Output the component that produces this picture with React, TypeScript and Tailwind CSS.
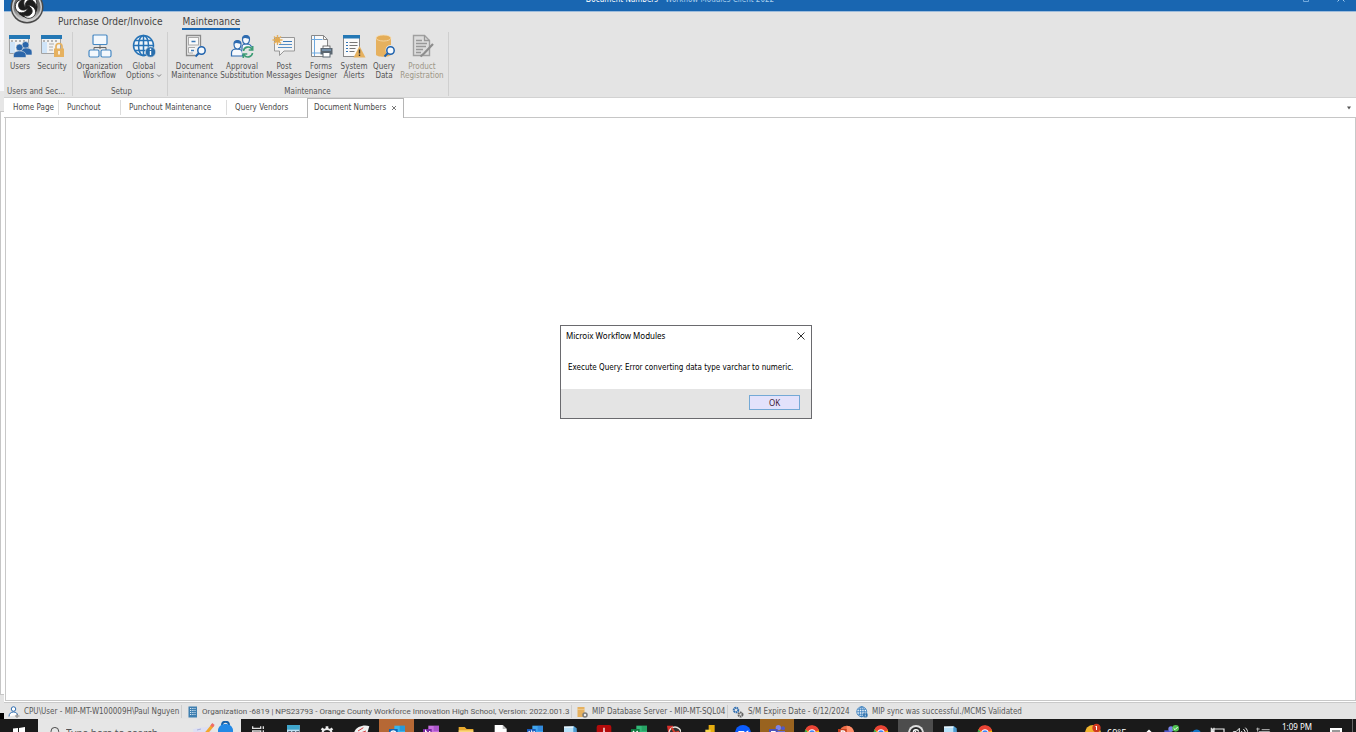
import React, { ReactNode } from "react";

const BLUE = "#2f6db0";
const DARK = "#7b7b7b";
const TAN = "#e6b15f";

function Svg({ children, size = "size-6" }: { children: ReactNode; size?: string }) {
  return (
    <svg viewBox="0 0 24 24" className={`${size} shrink-0`} fill="none" aria-hidden="true">
      {children}
    </svg>
  );
}

function WindowBase() {
  return (
    <>
      <path d="M1.5 5v14.500h19V5" fill="#f2f2f2" stroke="#a3a3a3" />
      <rect x="2" y="8" width="5" height="11" fill="#cfe4f8" />
      <rect x="1" y="1" width="21" height="4" fill="#2478b5" />
      <path d="M3 7h2M7 7h2M11 7h2M15 7h2" stroke="#777" />
    </>
  );
}

function Lens({ x, y }: { x: number; y: number }) {
  return (
    <g transform={`translate(${x} ${y})`}>
      <path d="M-2.500 2.500-6 6" stroke="#1f62ad" strokeWidth="2" />
      <circle r="3.700" fill="#f4f8fc" stroke="#1f62ad" strokeWidth="1.500" />
    </g>
  );
}

const UsersIcon = () => (
  <Svg>
    <WindowBase />
    <g fill="#2b66aa" stroke="#e4e4e4" strokeWidth=".6">
      <circle cx="17.500" cy="11" r="3.500" />
      <path d="M13 21v-3c0-3 2-4 4.500-4 4 0 6.500 1 6.500 4v3z" />
      <circle cx="11.500" cy="13.500" r="3.500" />
      <path d="M5.500 23.500v-2c0-3.500 3-4.500 6-4.500s6.500 1 6.500 4.500v2z" />
    </g>
  </Svg>
);
const SecurityIcon = () => (
  <Svg>
    <WindowBase />
    <path d="M9 10h5M9 13h4M9 16h4" stroke="#aaa" />
    <path d="M16 15v-2.500a3 3 0 0 1 6 0V15" stroke={TAN} strokeWidth="1.700" />
    <rect x="14" y="14.500" width="10" height="8.500" fill={TAN} />
    <path d="M19 17v3.500" stroke="#fff" strokeWidth="1.500" />
  </Svg>
);
const OrgIcon = () => (
  <Svg>
    <path d="M12 10v5M6 17v-3.500h12V17" stroke="#666" />
    <g fill="#f3f8fd" stroke="#4688c3" strokeWidth="1.200">
      <rect x="5" y="1" width="14" height="9.500" rx="1" />
      <rect x="1" y="16" width="10" height="7" rx="1.500" />
      <rect x="13" y="16" width="10" height="7" rx="1.500" />
    </g>
  </Svg>
);
const GlobeIcon = ({ size }: { size?: string }) => (
  <Svg size={size}>
    <g stroke="#2672b5" strokeWidth="1.500">
      <circle cx="11.500" cy="11.500" r="10" fill="#eef4fa" />
      <ellipse cx="11.500" cy="11.500" rx="5" ry="10" />
      <path d="M11.500 1.500v20M1.500 11.500h20M3 6.500h17M3 16.500h17" />
    </g>
    <circle cx="18.500" cy="18" r="5.200" fill="#2a6fad" stroke="#e4e4e4" strokeWidth=".6" />
    <path d="M18.500 14.500v1.500M18.500 17v4" stroke="#fff" strokeWidth="1.400" />
  </Svg>
);
const CabinetIcon = () => (
  <Svg>
    <path d="M12 21.500H3.500v-20h14V12" fill="#efefef" stroke="#8b8b8b" strokeWidth="1.300" />
    <rect x="5.500" y="3.500" width="10" height="7.500" fill="#fafafa" stroke="#aaa" />
    <path d="M12 13.500H5.500V19H10" fill="#fafafa" stroke="#aaa" />
    <path d="M8.500 7.500h4M8 16.500h3" stroke="#3c7ab8" strokeWidth="1.600" />
    <Lens x={18.5} y={16.5} />
  </Svg>
);
const ApprovalIcon = () => (
  <Svg>
    <g fill="#f6f9fd" stroke="#2d6bb0" strokeWidth="1.200">
      <path d="M12 16v-3c0-2 2-3 3.500-3h1c3 0 5 1.500 5 4v2z" />
      <path d="M12.500 5a3.500 3.500 0 1 1 7 0c0 3-1.500 5-3.500 5s-3.500-2-3.500-5z" />
      <path d="M1.500 22v-3c0-2.500 2-4 5-4s6 1.500 6 4v3z" />
      <path d="M4 10a3.500 3.500 0 1 1 7 0c0 3-1.500 5-3.500 5S4 13 4 10z" />
    </g>
    <path d="M12.500 5c0-5 7-5 7 0-2 0-4-2-7 0zM4 10c0-5 7-5 7 0-2 0-4-2-7 0z" fill="#2d6bb0" />
    <circle cx="18" cy="18" r="6" fill="#e4e4e4" />
    <path d="M13.500 17a4.700 4.700 0 0 1 8.500-2m.500 4a4.700 4.700 0 0 1-8.500 2M22.700 12v4h-4M13.300 24v-4h4" stroke="#3c9c74" strokeWidth="1.600" />
  </Svg>
);
const PostIcon = () => (
  <Svg>
    <path d="M2.500 3.500h20v13.500H12l-4.500 4.500V17h-5z" fill="#f3f3f3" stroke="#989898" />
    <path d="M11 7.500h9" stroke="#3c7ab8" />
    <path d="M7 10.500h13M6 13.500h14" stroke="#5a90c5" />
    <path d="M5.500 1v10M.5 6h10M2 2.500l7 7M9 2.500l-7 7" stroke={TAN} strokeWidth="1.400" />
    <circle cx="5.500" cy="6" r="2.600" fill="#e3aa50" />
  </Svg>
);
const FormsIcon = () => (
  <Svg>
    <path d="M2.500 1.500h12l4 4v17h-16z" fill="#fafafa" stroke="#888" />
    <path d="M14.500 1.500v4h4" stroke="#888" />
    <path d="M5.500 2v20M2.500 5.500h11M2.500 19h10" stroke="#6ea9df" />
    <rect x="14" y="12" width="7" height="3" fill="#fff" stroke="#555" strokeWidth=".8" />
    <rect x="11.500" y="14" width="12" height="6.500" fill="#5b6670" />
    <path d="M13 16h9" stroke="#91bce4" />
    <rect x="14" y="18.500" width="7" height="4.500" fill="#fff" stroke="#5b6670" />
  </Svg>
);
const AlertsIcon = () => (
  <Svg>
    <rect x="1.500" y="2.500" width="16" height="20" fill="#fafafa" stroke="#888" />
    <rect x="1" y="1" width="17" height="3.500" fill="#2478b5" />
    <path d="M4 8.500h2M4 11.500h2M4 14.500h2M4 17.500h2" stroke="#3475b5" />
    <path d="M7.500 8.500h8M7.500 11.500h8M7.500 14.500h6M7.500 17.500h5" stroke="#777" />
    <path d="m17.500 12 6 11.500h-12z" fill={TAN} />
    <path d="M17.500 15.500v4M17.500 20.500v1.500" stroke="#333" strokeWidth="1.400" />
  </Svg>
);
const QueryIcon = () => (
  <Svg>
    <path d="M4 4v16.500c0 3 15 3 15 0V4" fill={TAN} />
    <ellipse cx="11.500" cy="4" rx="7.500" ry="3" fill="#e4ad58" stroke="#f5dcb0" strokeWidth=".8" />
    <circle cx="18.500" cy="16" r="5" fill="#e4e4e4" />
    <Lens x={18.5} y={16.5} />
  </Svg>
);
const ProductIcon = () => (
  <Svg>
    <path d="M3.500 1.500h11l5 5v15h-16z" fill="#dcdcdc" stroke="#a0a0a0" strokeWidth="1.400" />
    <path d="M14.500 1.500v5h5M6 6.500h6M6 9.500h11M6 12.500h10M6 15.500h7M6 18.500h5" stroke="#989898" strokeWidth="1.300" />
    <path d="m23 10-9 9.500-3.500 3" stroke="#8d8d8d" strokeWidth="2.200" />
  </Svg>
);

function RibbonButton({ width, icon, lines, muted, menu }: { width: string; icon: ReactNode; lines: string[]; muted?: boolean; menu?: boolean }) {
  return (
    <button className={`${width} flex shrink-0 flex-col items-center gap-1 whitespace-nowrap ${muted ? "text-[#9d9787]" : "text-[#555]"}`}>
      {icon}
      <span className="flex flex-col items-center leading-[9px]">
        {lines.map((l, i) => (
          <span key={l} className="flex items-center gap-0.5">
            {l}
            {menu && i === lines.length - 1 && (
              <svg viewBox="0 0 6 4" className="h-1 w-1.5" fill="none" stroke="#777">
                <path d="m1 .5 2 2 2-2" />
              </svg>
            )}
          </span>
        ))}
      </span>
    </button>
  );
}

function RibbonGroup({ title, pad, children }: { title: string; pad: string; children: ReactNode }) {
  return (
    <section className={`flex flex-col justify-between border-r border-[#cfcfcf] ${pad}`}>
      <div className="flex pt-0.5">{children}</div>
      <h2 className="text-center leading-[9px] text-[#555]">{title}</h2>
    </section>
  );
}

function Tab({ width, label }: { width: string; label: string }) {
  return (
    <button className={`${width} my-0.5 border-r border-[#dcdcdc] pl-2 text-left`}>{label}</button>
  );
}

function Swirl({ className }: { className: string }) {
  return (
    <svg viewBox="0 0 34 34" className={className} aria-hidden="true">
      <defs>
        <linearGradient id="orb" x1="0" y1="0" x2="0" y2="1">
          <stop offset="0" stopColor="#555" />
          <stop offset=".6" stopColor="#777" />
          <stop offset="1" stopColor="#d8d8d8" />
        </linearGradient>
      </defs>
      <circle cx="17" cy="17" r="16.500" fill="#4a4a4a" />
      <circle cx="17" cy="17" r="15" fill="#cfcfcf" />
      <circle cx="17" cy="17" r="13.500" fill="url(#orb)" />
      <circle cx="17" cy="17" r="10.500" fill="#1d1d1d" />
      {[20, 140, 260].map((a) => (
        <g key={a} transform={`rotate(${a} 17 17)`}>
          <path d="M15.500 18C10 14 11.500 6 18 5.500c5 0 8 4 7 8-1-3-3.500-5-6.500-4.500-4 .5-5 5-3 9z" fill="#fff" stroke="#222" strokeWidth=".8" />
        </g>
      ))}
    </svg>
  );
}

function StatusItem({ icon, children, last, width }: { icon: ReactNode; children: ReactNode; last?: boolean; width: string }) {
  return (
    <div className={`${width} my-px flex shrink-0 items-center gap-1 whitespace-nowrap pl-1 ${last ? "" : "border-r border-[#cdcdcd]"}`}>
      {icon}
      <span>{children}</span>
    </div>
  );
}

const chrome = (
  <>
    <circle cx="12" cy="12" r="11" fill="#fbbc05" />
    <path d="M12 12 2 7a11 11 0 0 1 20.500 1z" fill="#ea4335" />
    <path d="M1 12a11 11 0 0 1 1.500-5.500L8 15l3 8A11 11 0 0 1 1 12" fill="#34a853" />
    <circle cx="12" cy="12" r="5.500" fill="#fff" />
    <circle cx="12" cy="12" r="4.300" fill="#4285f4" />
  </>
);
const notebook = (
  <>
    <path d="m3 3 15-1 2 22H3z" fill="#b9e1f8" />
    <path d="m17 1 5 4 1 19h-6z" fill="#4e9bd0" />
    <path d="M3 2h14v2.500H3z" fill="#e2f2fb" />
  </>
);
const office = (dark: string, light: string, glyph: string) => (
  <>
    <path d="M8 1h16v23H8z" fill={light} />
    <path d="M16 1h8v8h-8z" fill={dark} fillOpacity=".35" />
    <path d="M0 6h13v14H0z" fill={dark} />
    <path d={glyph} stroke="#fff" strokeWidth="2" fill="none" />
  </>
);

const taskIcons: { name: string; bg?: string; art: ReactNode }[] = [
  { name: "Task View", art: <path d="M4 2v3h12V2M4 9h12v9H4zM20 2v4M20 8v8" stroke="#ddd" strokeWidth="2" /> },
  { name: "Calculator", art: <><path d="M3 0h19v24H3z" fill="#bcdff0" /><path d="M3 0h19v7H3z" fill="#3fa6cc" /><path d="M5 10h4M11 10h4M17 10h4" stroke="#567" strokeWidth="2" /></> },
  { name: "Settings", art: <><circle cx="12" cy="13" r="7" stroke="#eee" strokeWidth="3" /><path d="M12 2v4M4 5l3 3M20 5l-3 3M1 13h4M19 13h4" stroke="#eee" strokeWidth="4" /></> },
  { name: "Snip", art: <><path d="M0 12C2 2 16-1 23 2l-3 10-8 5z" fill="#efefef" /><path d="m6 9 8-5M10 12l8-3" stroke="#d43d3d" strokeWidth="1.500" /></> },
  { name: "Outlook", bg: "bg-[#b66835]", art: office("#0f66b7", "#36b5ed", "M6.500 9a3.500 3.500 0 1 0 0 8 3.500 3.500 0 0 0 0-8") },
  { name: "OneNote", art: office("#7928a1", "#c870e0", "M4 17V9l6 8V9") },
  { name: "File Explorer", art: <><path d="M1 3h9l3 3h10v16H1z" fill="#e8a92e" /><path d="M1 8h22v14H1z" fill="#fbd778" /></> },
  { name: "Document", art: <><path d="M4 0h12l6 6v18H4z" fill="#fff" /><path d="M16 0v6h6" fill="#bbb" /></> },
  { name: "Word", art: office("#185abd", "#41a5ee", "m3 9 2 8 2-7 2 7 2-8") },
  { name: "Notepad", art: notebook },
  { name: "Acrobat", art: <><rect x="1" width="22" height="24" rx="3" fill="#b30b0b" /><path d="M12 4v6l-5 6M12 10l5 5" stroke="#fff" strokeWidth="2" /></> },
  { name: "Excel", art: office("#107c41", "#33b978", "m3 9 7 8M10 9l-7 8") },
  { name: "Capture", art: <><path d="M3 1h9v12H5z" fill="#d9302c" /><circle cx="15" cy="12" r="9" fill="#333" stroke="#e9e4dc" strokeWidth="2" /><path d="m15 12-5-8M15 12l6-2" stroke="#d83a26" strokeWidth="3" /></> },
  { name: "Power BI", art: <><path d="M13 0h9v24h-9z" fill="#e6ad10" /><path d="M8 7h8v17H8z" fill="#f6d751" /></> },
  { name: "Zoom", art: <><circle cx="12" cy="12" r="12" fill="#0b5cff" /><path d="M5 9h9v7H5zM15 11l5-3v8l-5-3z" fill="#fff" /></> },
  { name: "Teams", bg: "bg-[#99631f]", art: <><circle cx="14" cy="4" r="4" fill="#7b83eb" /><circle cx="21" cy="5" r="3" fill="#5059c9" /><path d="M8 9h16v12H8z" fill="#6a72d8" /><path d="M0 6h13v14H0z" fill="#4b53bc" /><path d="M3 10h7M6.500 10v7" stroke="#fff" strokeWidth="2" /></> },
  { name: "Chrome", art: chrome },
  { name: "PowerPoint", art: <><circle cx="13" cy="12" r="11" fill="#ed6c47" /><path d="M13 1a11 11 0 0 1 11 11H13z" fill="#ff8f6b" /><path d="M0 6h13v14H0z" fill="#c43e1c" /><path d="M5 17V9h3a2 2 0 0 1 0 5H5" stroke="#fff" strokeWidth="2" /></> },
  { name: "Chrome 2", art: chrome },
  { name: "Workflow Modules", bg: "bg-[#4d4d4d]", art: <><circle cx="12" cy="12" r="12" fill="#ddd" /><circle cx="12" cy="12" r="9" fill="#2a2a2a" /><path d="M8 11c0-5 7-5 8-1M8 17c3-1 4-4 3-8" stroke="#fff" strokeWidth="2" /></> },
  { name: "Notepad 2", art: notebook },
  { name: "Chrome 3", art: chrome },
];

function TrayIcon({ label, width, children }: { label: string; width: string; children: ReactNode }) {
  return (
    <button aria-label={label} className={`${width} flex shrink-0 justify-center pt-1.5`}>
      <svg viewBox="0 0 24 24" className="size-4" fill="none" aria-hidden="true">{children}</svg>
    </button>
  );
}

export default function App() {
  return (
    <div className="relative flex h-screen flex-col overflow-hidden bg-white font-['DejaVu_Sans_Condensed','Noto_Sans',sans-serif] text-[8px] text-[#484848]">
      <div className="flex min-h-0 flex-1">
        <div className="flex w-1 shrink-0 flex-col" aria-hidden="true">
          <div className="h-[91px] bg-[#f8f8fb]" />
          <div className="h-5 bg-[#e6e6e6]" />
          <div className="flex-1 border-y border-l border-[#c6c6c6]" />
          <div className="h-[18px] bg-[#e4e4e4]" />
          <div className="h-1.5 bg-black" />
        </div>

        <main className="flex min-w-0 flex-1 flex-col">
          <header className="flex h-3 shrink-0 justify-center overflow-hidden border-b border-[#9dbcdc] bg-[#1966b1]">
            <h1 className="-mt-1.5 leading-[12px] text-[#a9d0ee]">
              <span className="text-white">Document Numbers</span> - Workflow Modules Client 2022
            </h1>
          </header>
          <div className="absolute top-0 right-[11px] flex h-1 gap-[26px] overflow-hidden">
            <button aria-label="Restore">
              <svg viewBox="0 0 8 8" className="-mt-2 size-2" fill="none" stroke="#72a9dc">
                <path d="M.5 2.500h5v5h-5zM2.500 2V.5h5v5H6" />
              </svg>
            </button>
            <button aria-label="Close">
              <svg viewBox="0 0 8 8" className="-mt-2 size-2" fill="none" stroke="#a4cdef">
                <path d="m.5.5 7 7M7.500.5l-7 7" />
              </svg>
            </button>
          </div>
          <button aria-label="Application menu" className="absolute -top-2.5 left-2.5">
            <Swirl className="size-[34px]" />
          </button>

          <div className="shrink-0 border-b border-[#d2d2d2] bg-[#e4e4e4]">
            <nav className="flex gap-5 pt-1 pl-[54px] text-[10px] leading-[12px] text-[#444]">
              <button className="pb-0.5">Purchase Order/Invoice</button>
              <button className="border-b-2 border-[#1966b1]">Maintenance</button>
            </nav>
            <div className="flex h-[67px] pt-0.5 pb-px">
              <RibbonGroup title="Users and Sec..." pad="pr-1">
                <RibbonButton width="w-8" icon={<UsersIcon />} lines={["Users"]} />
                <RibbonButton width="w-8" icon={<SecurityIcon />} lines={["Security"]} />
              </RibbonGroup>
              <RibbonGroup title="Setup" pad="pl-1 pr-px">
                <RibbonButton width="w-[45px]" icon={<OrgIcon />} lines={["Organization", "Workflow"]} />
                <RibbonButton width="w-11" icon={<GlobeIcon />} lines={["Global", "Options"]} menu />
              </RibbonGroup>
              <RibbonGroup title="Maintenance" pad="pl-px pr-0.5">
                <RibbonButton width="w-[51px]" icon={<CabinetIcon />} lines={["Document", "Maintenance"]} />
                <RibbonButton width="w-11" icon={<ApprovalIcon />} lines={["Approval", "Substitution"]} />
                <RibbonButton width="w-10" icon={<PostIcon />} lines={["Post", "Messages"]} />
                <RibbonButton width="w-[34px]" icon={<FormsIcon />} lines={["Forms", "Designer"]} />
                <RibbonButton width="w-8" icon={<AlertsIcon />} lines={["System", "Alerts"]} />
                <RibbonButton width="w-7" icon={<QueryIcon />} lines={["Query", "Data"]} />
                <RibbonButton width="w-12" icon={<ProductIcon />} lines={["Product", "Registration"]} muted />
              </RibbonGroup>
            </div>
          </div>

          <nav className="flex h-5 shrink-0 whitespace-nowrap border-b border-[#c6c6c6] pl-px">
            <Tab width="w-[54px]" label="Home Page" />
            <Tab width="w-[62px]" label="Punchout" />
            <Tab width="w-[106px]" label="Punchout Maintenance" />
            <button className="w-20 pl-2 text-left">Query Vendors</button>
            <div className="z-10 -mb-px flex w-[97px] items-center justify-between border border-b-0 border-[#b5b5b5] bg-white px-1.5 pb-px">
              <button>Document Numbers</button>
              <button aria-label="Close tab">
                <svg viewBox="0 0 6 6" className="size-1.5" stroke="#777"><path d="m1 1 4 4M5 1 1 5" /></svg>
              </button>
            </div>
            <button aria-label="Tab list" className="ml-auto pr-1">
              <svg viewBox="0 0 6 4" className="h-1 w-1.5"><path d="M1 .5h4L3 3.500z" fill="#555" /></svg>
            </button>
          </nav>

          <div className="mb-px ml-px flex-1 border-x border-b border-[#c8c8c8] bg-white" />

          <footer className="flex h-[17px] shrink-0 border-t border-[#c9c9c9] bg-[#e4e4e4] pt-px text-[#585858]">
            <StatusItem
              width="w-[178px]"
              icon={
                <Svg size="size-3">
                  <circle cx="11" cy="6" r="4.500" fill="#fff" stroke="#2f6db0" strokeWidth="2" />
                  <path d="M2 21c0-6 4-9 9-9s8 3 8 6" fill="#fff" stroke="#2f6db0" strokeWidth="2" />
                  <path d="M14 20h9M18 16v8" stroke="#888" strokeWidth="2" />
                </Svg>
              }
            >
              CPU\User - MIP-MT-W100009H\Paul Nguyen
            </StatusItem>
            <StatusItem
              width="w-[390px]"
              icon={
                <Svg size="size-3">
                  <path d="M5 1h17v22H5z" fill="#3f7fb0" />
                  <path d="M8 5h11M8 9h11M8 13h11M8 17h11" stroke="#d9e8f5" strokeWidth="2" strokeDasharray="2.500 2" />
                </Svg>
              }
            >
              <span className="font-['Roboto',sans-serif]">
                Organization -6819 | NPS23793 - Orange County Workforce Innovation High School, Version: 2022.001.3
              </span>
            </StatusItem>
            <StatusItem
              width="w-[156px]"
              icon={
                <Svg size="size-3">
                  <path d="M3 2h14v20H3z" fill={TAN} />
                  <path d="M3 7h14" stroke="#f6deb4" />
                  <circle cx="18" cy="18" r="4" fill="#eee" stroke={DARK} strokeWidth="3" />
                </Svg>
              }
            >
              MIP Database Server - MIP-MT-SQL04
            </StatusItem>
            <StatusItem
              width="w-[124px]"
              last
              icon={
                <Svg size="size-3">
                  <circle cx="8" cy="8" r="4.500" stroke={BLUE} strokeWidth="4" strokeDasharray="3 1" />
                  <circle cx="17" cy="17" r="4" stroke="#666" strokeWidth="4" strokeDasharray="3 1" />
                </Svg>
              }
            >
              S/M Expire Date - 6/12/2024
            </StatusItem>
            <StatusItem width="w-[170px]" last icon={<GlobeIcon size="size-3" />}>
              MIP sync was successful./MCMS Validated
            </StatusItem>
          </footer>
        </main>
      </div>

      <div className="flex h-[13px] shrink-0 overflow-hidden bg-[#1a1a1a] font-['Noto_Sans',sans-serif] text-white">
        <button aria-label="Start" className="flex w-[38px] shrink-0 justify-center pt-2">
          <svg viewBox="0 0 12 12" className="size-3" fill="#fff"><path d="M0 1.500 5 1v4.500H0zM6 .9 12 0v5.500H6zM0 6.500h5V11l-5-.5zM6 6.500h6V12l-6-.9z" /></svg>
        </button>
        <label className="flex w-[203px] shrink-0 gap-1.5 bg-[#e6e6e6] pl-2.5">
          <svg viewBox="0 0 14 14" className="mt-2 size-3" fill="none" stroke="#333"><circle cx="8" cy="5" r="4.500" /><path d="m5 8-5 5" /></svg>
          <input
            aria-label="Search"
            placeholder="Type here to search"
            className="mt-1.5 h-4 min-w-0 flex-1 bg-transparent text-[10px] leading-4 outline-none placeholder:text-[#555]"
          />
          <svg viewBox="0 0 48 24" className="mt-0.5 h-6 w-12 shrink-0" fill="none">
            <path d="m0 8 19-3-2 18H2z" fill="#dcdff4" />
            <path d="m4 9 4-1M9 12l5-1M4 13l3-1" stroke="#aab0dc" />
            <path d="m11 15 9-11" stroke="#f4a62a" strokeWidth="3" />
            <path d="m18.500 5.500 2-2.500" stroke="#ef6c67" strokeWidth="3" />
            <path d="M29 4.500c0-5 7-5 7 0" stroke="#1560a8" strokeWidth="2" />
            <path d="M25 24V9c1-8 14-8 15 0v15z" fill="#2389e5" />
          </svg>
        </label>
        <div className="grid w-[761px] shrink-0 grid-cols-[repeat(22,minmax(0,1fr))]">
          {taskIcons.map((t) => (
            <button key={t.name} aria-label={t.name} className={`flex justify-center pt-1.5 ${t.bg ?? ""}`}>
              <svg viewBox="0 0 24 24" className="size-4 shrink-0" fill="none" aria-hidden="true">{t.art}</svg>
            </button>
          ))}
        </div>
        <div className="ml-auto flex shrink-0 whitespace-nowrap">
          <button className="flex w-14 gap-1.5 text-[9px] leading-[12px]">
            <svg viewBox="0 0 16 16" className="mt-1.5 size-4 overflow-visible">
              <circle cx="8" cy="8" r="8" fill="#f2b42e" />
              <circle cx="11.500" cy="3" r="4.200" fill="#d13a22" />
              <path d="m10.500 2 1-1v4" stroke="#fff" fill="none" />
            </svg>
            <span className="pt-2">69°F</span>
          </button>
          <TrayIcon label="Show hidden icons" width="w-4"><path d="m8 12 4-4 4 4" stroke="#fff" strokeWidth="2" /></TrayIcon>
          <TrayIcon label="Teams status" width="w-7"><path d="M2 8h11v12H2z" fill="#5059c9" /><circle cx="12" cy="6" r="4" fill="#7b83eb" /><circle cx="19" cy="5" r="5" fill="#4ec04e" /><path d="m16 5 2 2 4-4" stroke="#fff" strokeWidth="1.500" /></TrayIcon>
          <TrayIcon label="OneDrive" width="w-[22px]"><path d="M1 18c-2-5 2-9 6-8 3-5 11-4 12 1 6 1 5 7 2 7z" fill="#1375c7" /></TrayIcon>
          <TrayIcon label="Network" width="w-[22px]"><path d="M4 6h17v12H4zM2 4v6h4V4M12 18v4" stroke="#eee" strokeWidth="1.800" /></TrayIcon>
          <TrayIcon label="Volume" width="w-[22px]"><path d="M2 10h4l5-5v14l-5-4H2zM14 9c2 2 2 4 0 6M17 6c4 4 4 8 0 12M20 4c5 5 5 11 0 16" stroke="#eee" strokeWidth="1.500" /></TrayIcon>
          <TrayIcon label="Keyboard" width="w-6"><path d="M2 6h5M10 7h12M6 10h16v9H6zM4 4v6" stroke="#bbb" strokeWidth="1.500" /></TrayIcon>
          <time className="w-11 pt-0.5 text-center text-[8px] leading-[12px]">1:09 PM</time>
          <button aria-label="Notifications" className="flex w-[33px] justify-center pt-2">
            <svg viewBox="0 0 12 12" className="size-3" fill="#fff"><path d="M0 1h12v9H8l-2 2v-2H0z" /><path d="M2 4h8M2 6h8" stroke="#333" /></svg>
          </button>
          <div className="w-1 border-l border-[#666]" />
        </div>
      </div>

      <div className="pointer-events-none absolute inset-0 flex items-center justify-center pt-3 pl-4">
        <div role="alertdialog" aria-labelledby="dlg-title" className="pointer-events-auto w-[252px] border border-[#6a6a6e] bg-white font-['Noto_Sans',sans-serif] text-black">
          <div className="flex h-5 items-center justify-between pr-1.5 pl-[5px]">
            <h2 id="dlg-title">Microix Workflow Modules</h2>
            <button aria-label="Close">
              <svg viewBox="0 0 8 8" className="size-2" stroke="#333"><path d="m.5.5 7 7M7.500.5l-7 7" /></svg>
            </button>
          </div>
          <p className="h-[43px] pt-4 pl-[7px] font-['DejaVu_Sans_Condensed',sans-serif] leading-[12px]">Execute Query: Error converting data type varchar to numeric.</p>
          <div className="flex justify-end bg-[#e4e4e4] pt-1.5 pb-2 pr-[11px]">
            <button className="h-[15px] w-[51px] border border-[#74a9d6] bg-[#e3e2fb] leading-[12px] text-[#3b1530]">OK</button>
          </div>
        </div>
      </div>
    </div>
  );
}
